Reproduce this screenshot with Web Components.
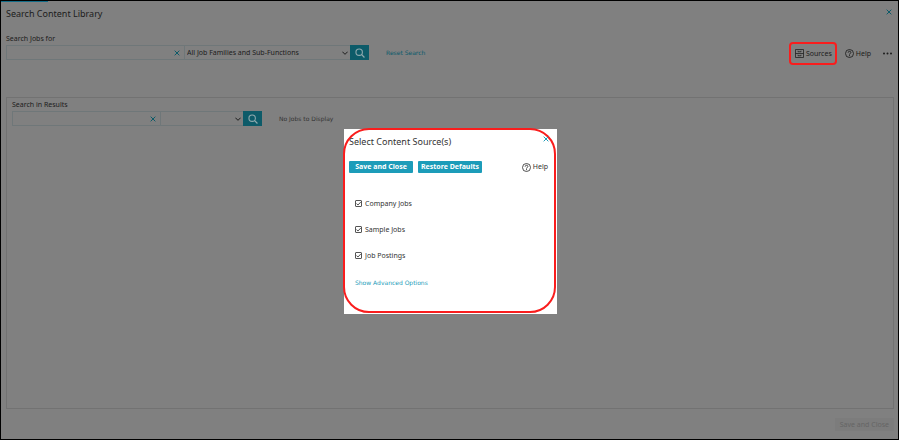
<!DOCTYPE html>
<html lang="en">
<head>
<meta charset="utf-8">
<title>Search Content Library</title>
<style>
  :root {
    --page: #808080;
    --line: #6f7779;
    --panel-line: #727272;
    --teal-dim: #0d5b69;
    --teal: #1c9cb9;
    --highlight: #f91d1d;
    --ink: #1c1c1c;
  }

  html,
  body {
    height: 100%;
    margin: 0;
  }

  body {
    font: 7px/12px "Noto Sans", sans-serif;
    color: var(--ink);
    background: var(--page);
  }
</style>
</head>
<body>
<library-page></library-page>

<template id="app-icon-template">
  <style>
    :host {
      display: block;
      flex: none;
      width: 9px;
      height: 9px;
    }

    :host([name="close"]),
    :host([name="chevron"]) {
      width: 6px;
      height: 6px;
    }

    svg {
      display: block;
      width: 100%;
      height: 100%;
      fill: none;
      stroke: currentColor;
    }
  </style>
  <svg viewBox="0 0 18 18" aria-hidden="true"></svg>
</template>

<template id="search-bar-template">
  <style>
    :host {
      display: block;
    }

    label {
      display: block;
    }

    .row {
      display: flex;
      align-items: center;
    }

    .field {
      display: flex;
      align-items: center;
      box-sizing: border-box;
      height: 15px;
      border: 1px solid var(--line);
      border-right: 0;
    }

    .text {
      width: var(--text-width, 178px);
    }

    .choice {
      display: grid;
      width: var(--choice-width, 166px);
    }

    input,
    select {
      appearance: none;
      box-sizing: border-box;
      min-width: 0;
      height: 12px;
      padding: 0 2px;
      border: 0;
      font: inherit;
      color: inherit;
      background: none;
      outline: 0;
    }

    input {
      flex: 1;
    }

    select {
      grid-area: 1 / 1;
      width: 100%;
    }

    .choice app-icon {
      grid-area: 1 / 1;
      justify-self: end;
      align-self: center;
      margin-right: 2px;
      pointer-events: none;
    }

    button {
      display: flex;
      padding: 0;
      border: 0;
      color: var(--teal-dim);
      background: none;
    }

    .clear {
      margin-right: 4px;
    }

    .go {
      align-items: center;
      justify-content: center;
      width: 19px;
      height: 15px;
      color: #8fa9ae;
      background: var(--teal-dim);
    }

    .go app-icon {
      width: 10px;
      height: 10px;
    }

    ::slotted(*) {
      margin-left: 17px;
    }
  </style>
  <label for="query"></label>
  <div class="row">
    <div class="field text">
      <input id="query" type="text">
      <button class="clear" type="button" aria-label="Clear"><app-icon name="close"></app-icon></button>
    </div>
    <div class="field choice">
      <select aria-label="Filter"><option></option></select>
      <app-icon name="chevron"></app-icon>
    </div>
    <button class="go" type="button" aria-label="Search"><app-icon name="search"></app-icon></button>
    <slot></slot>
  </div>
</template>

<template id="tool-button-template">
  <style>
    :host {
      display: block;
    }

    button {
      display: flex;
      align-items: center;
      gap: 2px;
      height: 23px;
      padding: 0;
      border: 0;
      font: inherit;
      color: inherit;
      background: none;
    }

    :host([highlighted]) button {
      padding: 0 3px 0 4px;
      border: 2px solid var(--highlight);
      border-radius: 4px;
    }
  </style>
  <button type="button"><app-icon></app-icon><slot></slot></button>
</template>

<template id="check-option-template">
  <style>
    :host {
      display: block;
    }

    label {
      display: flex;
      align-items: center;
      gap: 3px;
    }

    .box {
      display: grid;
    }

    input {
      appearance: none;
      grid-area: 1 / 1;
      box-sizing: border-box;
      width: 7px;
      height: 7px;
      margin: 0;
      border: 1px solid #555;
      border-radius: 1px;
    }

    app-icon {
      grid-area: 1 / 1;
      width: 7px;
      height: 7px;
      visibility: hidden;
      pointer-events: none;
    }

    input:checked + app-icon {
      visibility: visible;
    }
  </style>
  <label>
    <span class="box">
      <input type="checkbox" checked>
      <app-icon name="check"></app-icon>
    </span>
    <slot></slot>
  </label>
</template>

<template id="source-dialog-template">
  <style>
    :host {
      display: block;
      box-sizing: border-box;
      width: 213px;
      border: 1px solid transparent;
      color: #333;
      background: #fff;
    }

    /* Rounded callout drawn along the edge of the dialog */
    .callout {
      box-sizing: border-box;
      margin: -2px 0 0 -2px;
      padding: 6px 6px 22px 4px;
      border: 2px solid var(--highlight);
      border-radius: 26px;
    }

    header,
    .actions {
      display: flex;
      justify-content: space-between;
    }

    h2 {
      margin: 0;
      font: 9px/12px "Noto Sans", sans-serif;
    }

    .close {
      display: flex;
      align-self: flex-start;
      margin-right: -1px;
      padding: 0;
      border: 0;
      color: var(--teal);
      background: none;
    }

    .actions {
      align-items: center;
      margin-top: 8px;
    }

    .buttons {
      display: flex;
      gap: 5px;
    }

    .buttons button {
      width: 64px;
      height: 12px;
      padding: 0;
      border: 0;
      border-radius: 1px;
      font: inherit;
      font-weight: bold;
      color: #fff;
      background: var(--teal);
    }

    .options {
      display: grid;
      gap: 14px;
      margin: 19px 6px 15px;
    }

    a {
      margin-left: 6px;
      font: 6px/12px "DejaVu Sans", sans-serif;
      color: var(--teal);
      text-decoration: none;
    }
  </style>
  <div class="callout">
    <header>
      <h2><slot name="title"></slot></h2>
      <button class="close" type="button" aria-label="Close"><app-icon name="close"></app-icon></button>
    </header>
    <div class="actions">
      <div class="buttons">
        <button type="button">Save and Close</button>
        <button type="button">Restore Defaults</button>
      </div>
      <tool-button icon="help">Help</tool-button>
    </div>
    <div class="options"><slot></slot></div>
    <a href="#advanced">Show Advanced Options</a>
  </div>
</template>

<template id="library-page-template">
  <style>
    :host {
      display: flex;
      flex-direction: column;
      position: relative;
      box-sizing: border-box;
      min-height: 100vh;
      padding: 0 4px 8px 5px;
      border: 1px solid #000;
      background: var(--page);
    }

    .progress {
      width: 47px;
      height: 1px;
      margin-left: -5px;
      background: #126c88;
    }

    header,
    .top {
      display: flex;
      justify-content: space-between;
    }

    header {
      margin-top: 6px;
    }

    h1 {
      margin: 0;
      font: 9px/12px "Noto Sans", sans-serif;
    }

    .close {
      display: flex;
      align-self: flex-start;
      margin: 1px 2px 0 0;
      padding: 0;
      border: 0;
      color: var(--teal-dim);
      background: none;
    }

    .top {
      margin-top: 13px;
    }

    .tools {
      display: flex;
      align-items: center;
      gap: 8px;
      margin: 9px 2px 0 0;
    }

    .tools tool-button:last-child {
      margin-left: 4px;
    }

    .results {
      flex: 1;
      margin-top: 32px;
      padding: 1px 5px;
      border: 1px solid var(--panel-line);
    }

    .results search-bar {
      --text-width: 148px;
      --choice-width: 83px;
    }

    .results span,
    .reset {
      font: 6px/12px "DejaVu Sans", sans-serif;
    }

    .results span {
      color: #333;
    }

    .reset {
      color: #0a5a6b;
      text-decoration: none;
    }

    footer {
      display: flex;
      justify-content: flex-end;
      margin-top: 9px;
    }

    footer button {
      height: 13px;
      padding: 0 5px;
      border: 0;
      font: inherit;
      color: #656565;
      background: #7c7c7c;
    }

    .overlay {
      position: absolute;
      inset: 2px 0 0 2px;
      display: flex;
      align-items: center;
      justify-content: center;
    }
  </style>
  <div class="progress"></div>
  <header>
    <h1>Search Content Library</h1>
    <button class="close" type="button" aria-label="Close"><app-icon name="close"></app-icon></button>
  </header>
  <div class="top">
    <search-bar label="Search Jobs for" choice="All Job Families and Sub-Functions">
      <a class="reset" href="#reset">Reset Search</a>
    </search-bar>
    <div class="tools">
      <tool-button icon="sources" highlighted>Sources</tool-button>
      <tool-button icon="help">Help</tool-button>
      <tool-button icon="more" aria-label="More"></tool-button>
    </div>
  </div>
  <section class="results">
    <search-bar label="Search in Results">
      <span>No Jobs to Display</span>
    </search-bar>
  </section>
  <footer><button type="button" disabled>Save and Close</button></footer>
  <div class="overlay">
    <source-dialog role="dialog">
      <span slot="title">Select Content Source(s)</span>
      <check-option>Company Jobs</check-option>
      <check-option>Sample Jobs</check-option>
      <check-option>Job Postings</check-option>
    </source-dialog>
  </div>
</template>

<script>
  (function () {
    const icons = {
      close: '<path stroke-width="3" d="M2 2l14 14M16 2L2 16"/>',
      chevron: '<path stroke-width="3" d="M1 5l8 8 8-8"/>',
      search:
        '<circle cx="7.5" cy="7.5" r="5.8" stroke-width="2"/><path stroke-width="2.2" d="M12 12l5 5"/>',
      help:
        '<circle cx="9" cy="9" r="8" stroke-width="1.7"/><path stroke-width="1.9" d="M6.3 7.2c0-3.6 5.4-3.6 5.4-.2 0 2-2.7 2-2.7 4.2M9 12.4v2"/>',
      sources:
        '<path stroke-width="1.5" d="M1 1h16v16H1zM1 9h16M6 3.500v2h6v-2M6 11.500v2h6v-2"/>',
      more:
        '<g fill="currentColor" stroke="none"><circle cx="2" cy="9" r="2"/><circle cx="9" cy="9" r="2"/><circle cx="16" cy="9" r="2"/></g>',
      check: '<path stroke-width="2.2" d="M4 9l3.500 4L15 5"/>',
    };

    function attach(element, id) {
      const template = document.querySelector(id);
      element.attachShadow({ mode: "open" });
      element.shadowRoot.appendChild(template.content.cloneNode(true));
    }

    customElements.define(
      "app-icon",
      class extends HTMLElement {
        connectedCallback() {
          attach(this, "#app-icon-template");
          this.shadowRoot.querySelector("svg").innerHTML =
            icons[this.getAttribute("name")];
        }
      }
    );

    customElements.define(
      "search-bar",
      class extends HTMLElement {
        connectedCallback() {
          attach(this, "#search-bar-template");
          this.shadowRoot.querySelector("label").textContent =
            this.getAttribute("label");
          this.shadowRoot.querySelector("option").textContent =
            this.getAttribute("choice") || "";
        }
      }
    );

    customElements.define(
      "tool-button",
      class extends HTMLElement {
        connectedCallback() {
          const template = document.querySelector("#tool-button-template");
          const content = template.content.cloneNode(true);
          content
            .querySelector("app-icon")
            .setAttribute("name", this.getAttribute("icon"));
          this.attachShadow({ mode: "open" });
          this.shadowRoot.appendChild(content);
        }
      }
    );

    ["check-option", "source-dialog", "library-page"].forEach((name) => {
      customElements.define(
        name,
        class extends HTMLElement {
          connectedCallback() {
            attach(this, `#${name}-template`);
          }
        }
      );
    });
  })();
</script>
</body>
</html>
